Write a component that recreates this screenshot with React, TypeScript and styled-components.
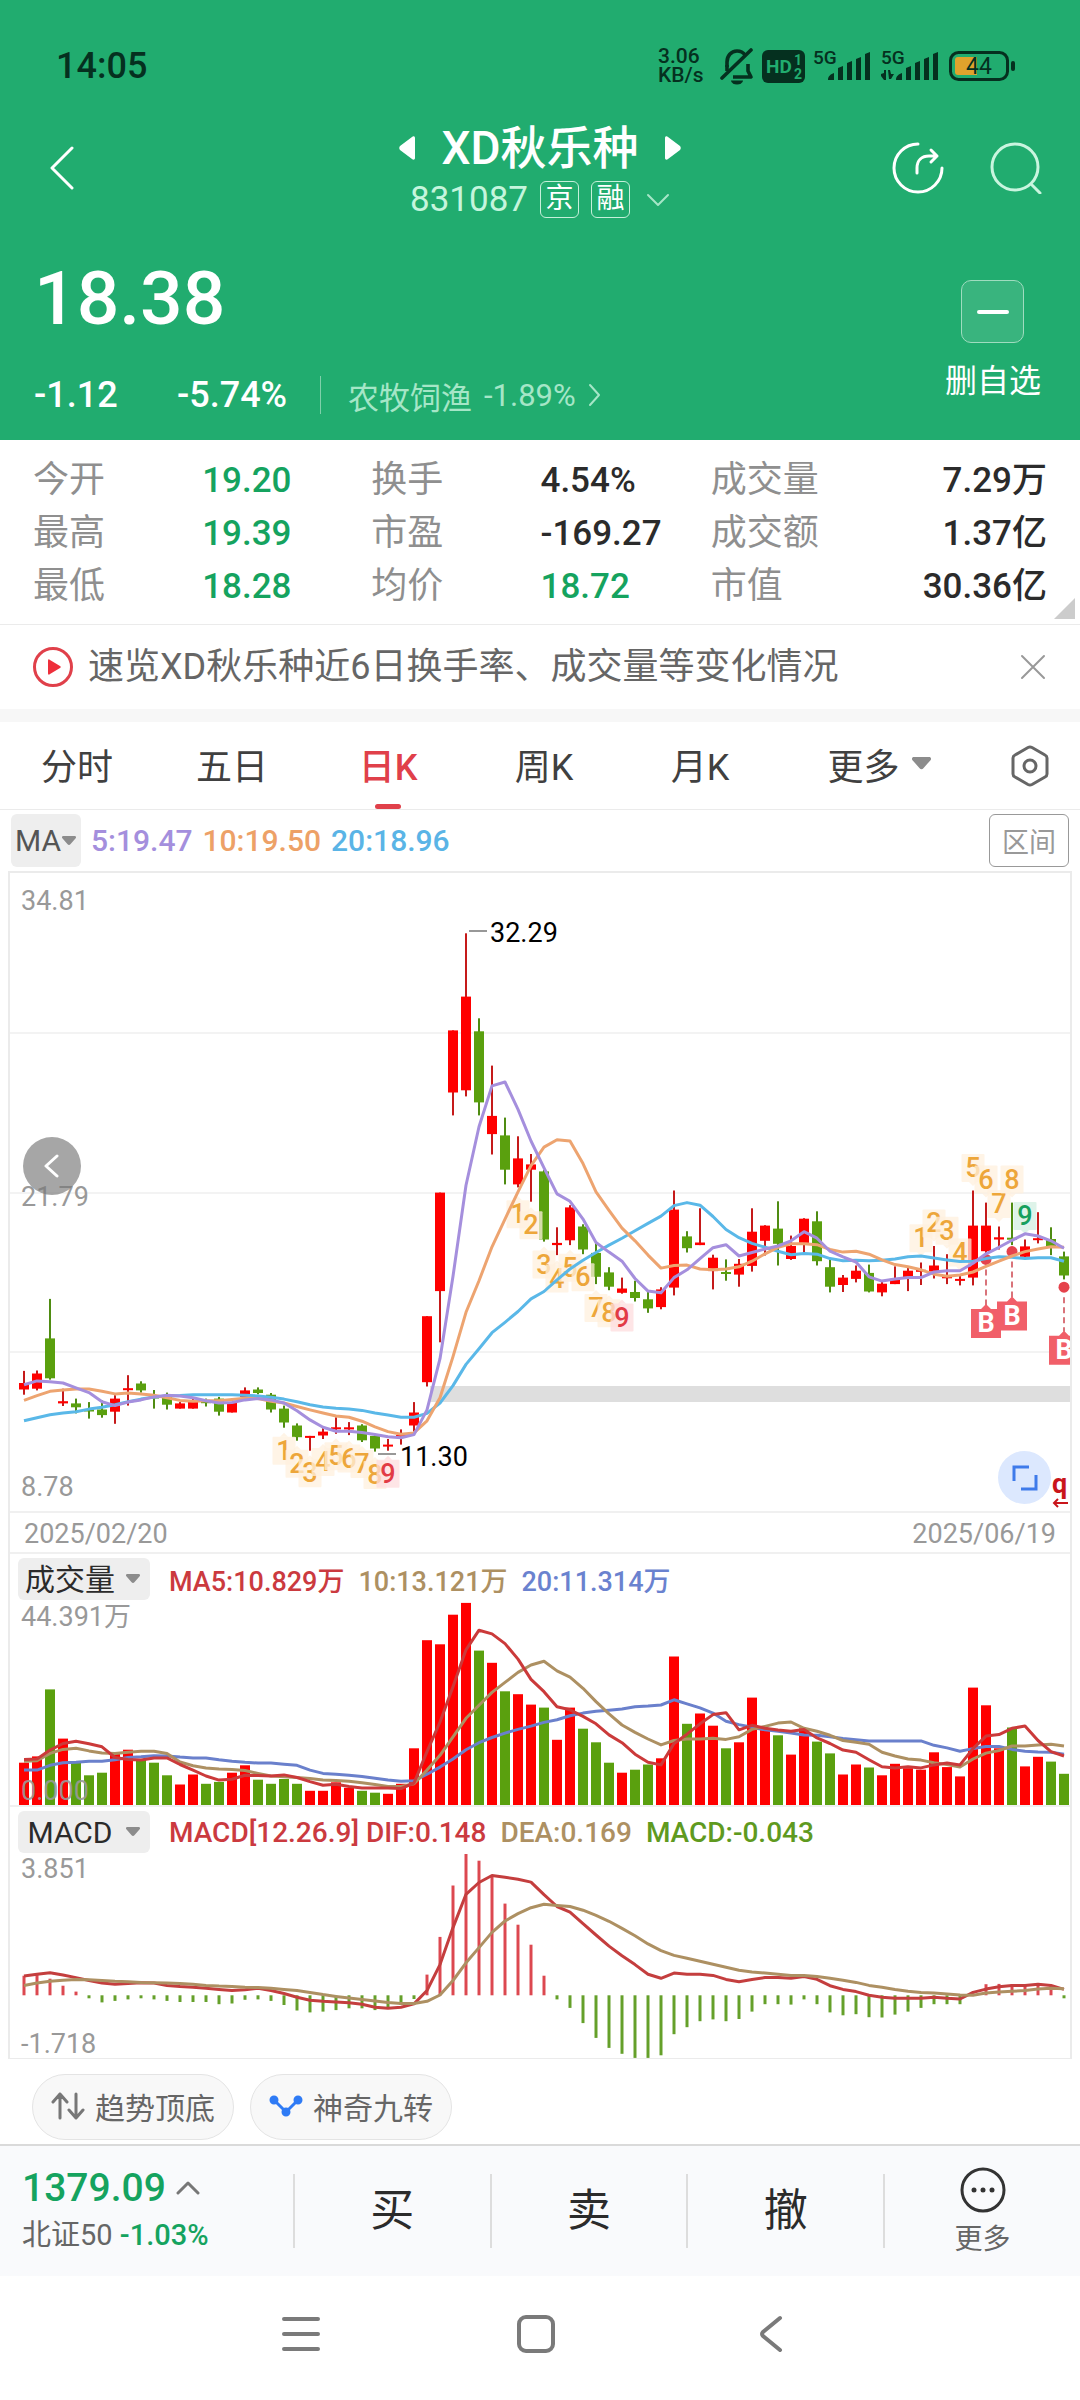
import React from "react";
import styled, { createGlobalStyle } from "styled-components";

const color = {
  brand: "#21ac6f",
  ink: "#2b2b2b",
  sub: "#666666",
  mute: "#8f8f8f",
  axis: "#999999",
  line: "#ebebeb",
  red: "#e0404a",
  green: "#15a35f",
  up: "#ff0000",
  down: "#5aa00e",
  status: "#05301f",
};

/* ---------- market data, in chart units measured downwards ---------- */

type Candle = [up: 0 | 1, high: number, top: number, bottom: number, low: number];

const candles: Candle[] = [
  [1, 1178, 1206, 1221, 1233], [1, 1177, 1184, 1219, 1223], [0, 1012, 1103, 1195, 1198], [1, 1219, 1248, 1253, 1259],
  [0, 1242, 1253, 1262, 1276], [0, 1250, 1267, 1270, 1288], [0, 1246, 1267, 1280, 1286], [1, 1234, 1242, 1272, 1300],
  [1, 1188, 1218, 1221, 1258], [0, 1202, 1207, 1223, 1228], [0, 1222, 1237, 1240, 1265], [0, 1228, 1236, 1256, 1267],
  [1, 1250, 1253, 1265, 1265], [1, 1240, 1246, 1265, 1265], [0, 1242, 1248, 1252, 1260], [0, 1238, 1242, 1272, 1281],
  [1, 1250, 1252, 1274, 1274], [1, 1216, 1223, 1238, 1238], [0, 1216, 1221, 1229, 1232], [0, 1229, 1233, 1267, 1274],
  [0, 1258, 1265, 1297, 1309], [0, 1299, 1304, 1331, 1339], [1, 1328, 1328, 1332, 1362], [1, 1308, 1318, 1327, 1335],
  [1, 1285, 1308, 1311, 1323], [1, 1296, 1308, 1313, 1326], [0, 1301, 1304, 1338, 1342], [0, 1325, 1328, 1357, 1364],
  [1, 1335, 1348, 1352, 1362], [1, 1313, 1326, 1330, 1348], [1, 1250, 1274, 1304, 1318], [1, 1052, 1052, 1204, 1214],
  [1, 767, 767, 994, 1112], [1, 393, 393, 536, 589], [1, 169, 315, 531, 545], [0, 365, 395, 559, 589],
  [1, 474, 590, 632, 679], [0, 594, 635, 714, 748], [1, 637, 688, 748, 755], [1, 678, 702, 714, 788],
  [0, 715, 718, 875, 880], [1, 847, 883, 888, 911], [1, 796, 801, 877, 888], [0, 840, 845, 898, 909],
  [0, 880, 906, 961, 978], [0, 939, 951, 984, 992], [1, 963, 988, 998, 1000], [0, 970, 996, 1010, 1018],
  [0, 995, 1013, 1034, 1044], [1, 985, 990, 1031, 1036], [1, 762, 806, 986, 1004], [0, 856, 868, 895, 905],
  [1, 803, 882, 888, 888], [1, 910, 917, 948, 990], [0, 921, 950, 953, 970], [1, 920, 931, 956, 984],
  [1, 803, 857, 936, 949], [1, 842, 843, 878, 912], [0, 787, 850, 885, 935], [1, 866, 890, 920, 922],
  [1, 826, 827, 883, 905], [0, 810, 833, 925, 935], [0, 922, 939, 984, 997], [1, 957, 963, 980, 996],
  [1, 935, 947, 966, 974], [0, 933, 952, 995, 997], [1, 972, 977, 997, 1006], [1, 937, 966, 978, 978],
  [1, 940, 947, 963, 994], [1, 928, 945, 949, 980], [1, 890, 935, 949, 965], [1, 909, 960, 964, 978],
  [1, 957, 966, 970, 981], [1, 762, 843, 963, 981], [1, 790, 843, 902, 920], [1, 845, 870, 875, 898],
  [0, 790, 871, 875, 888], [1, 875, 891, 915, 918], [1, 812, 872, 876, 884], [0, 847, 874, 890, 911],
  [0, 903, 914, 958, 967],
];

const priceMa5 = [1210, 1201, 1203, 1206, 1217, 1228, 1249, 1258, 1250, 1245, 1238, 1234, 1236, 1240, 1247, 1252, 1251, 1245, 1242, 1245, 1252, 1270, 1291, 1308, 1317, 1317, 1320, 1325, 1330, 1332, 1325, 1268, 1150, 960, 750, 615, 521, 512, 575, 648, 710, 770, 787, 828, 882, 904, 925, 965, 994, 998, 963, 945, 919, 894, 887, 913, 905, 897, 890, 878, 857, 872, 902, 915, 927, 961, 971, 966, 963, 963, 950, 947, 947, 930, 908, 893, 877, 862, 867, 878, 895];
const priceMa10 = [1246, 1235, 1225, 1222, 1220, 1220, 1225, 1231, 1229, 1231, 1234, 1240, 1246, 1248, 1247, 1247, 1244, 1241, 1242, 1248, 1252, 1260, 1268, 1275, 1282, 1285, 1294, 1307, 1318, 1324, 1321, 1293, 1240, 1145, 1043, 970, 892, 828, 765, 705, 662, 645, 648, 700, 765, 808, 849, 878, 911, 941, 935, 934, 943, 945, 943, 938, 925, 908, 893, 885, 885, 887, 898, 904, 902, 909, 922, 933, 938, 945, 955, 960, 957, 950, 937, 925, 913, 903, 897, 892, 893];
const priceMa20 = [1293, 1286, 1279, 1275, 1272, 1266, 1262, 1256, 1249, 1243, 1238, 1236, 1235, 1233, 1233, 1233, 1233, 1234, 1236, 1239, 1243, 1249, 1256, 1261, 1264, 1266, 1269, 1275, 1280, 1285, 1285, 1276, 1252, 1212, 1163, 1127, 1090, 1066, 1041, 1012, 995, 968, 943, 923, 905, 888, 872, 855, 838, 821, 797, 790, 796, 822, 852, 871, 884, 893, 902, 910, 907, 909, 919, 924, 923, 924, 923, 920, 915, 913, 918, 922, 926, 925, 919, 915, 916, 919, 917, 917, 925];

const volumes = [710, 693, 512, 645, 710, 744, 737, 681, 675, 700, 710, 744, 769, 742, 767, 762, 737, 717, 756, 767, 754, 767, 786, 786, 763, 778, 786, 791, 794, 767, 671, 379, 390, 310, 278, 407, 440, 517, 525, 553, 561, 648, 561, 618, 655, 710, 737, 729, 715, 698, 423, 605, 577, 610, 671, 655, 534, 622, 636, 688, 617, 653, 685, 742, 715, 723, 744, 713, 725, 729, 682, 722, 747, 507, 555, 671, 615, 720, 694, 707, 740];
const volMa5 = [701, 700, 676, 658, 652, 659, 667, 696, 701, 703, 697, 697, 715, 730, 746, 757, 755, 744, 745, 746, 743, 750, 761, 771, 768, 774, 778, 778, 778, 780, 765, 680, 600, 505, 405, 352, 362, 388, 430, 485, 518, 559, 567, 585, 605, 635, 656, 687, 709, 716, 658, 633, 605, 580, 575, 621, 609, 617, 622, 625, 620, 643, 658, 676, 682, 702, 721, 724, 721, 724, 716, 711, 716, 672, 638, 634, 617, 611, 650, 680, 692];
const volMa10 = [706, 705, 685, 674, 671, 678, 684, 685, 682, 679, 679, 685, 708, 718, 724, 727, 728, 731, 739, 746, 748, 750, 753, 757, 758, 760, 764, 769, 774, 774, 767, 730, 690, 640, 590, 555, 520, 493, 466, 446, 436, 462, 479, 509, 545, 578, 608, 628, 646, 662, 650, 646, 646, 644, 647, 640, 620, 612, 603, 600, 617, 625, 636, 650, 655, 660, 682, 692, 700, 703, 710, 715, 722, 700, 684, 677, 665, 665, 662, 660, 665];
const volMa20 = [730, 730, 717, 710, 709, 706, 706, 702, 696, 694, 691, 692, 695, 697, 697, 702, 706, 709, 711, 711, 714, 717, 730, 739, 741, 744, 747, 752, 757, 760, 759, 741, 722, 700, 675, 656, 642, 630, 620, 611, 601, 594, 583, 576, 571, 568, 565, 559, 557, 554, 540, 551, 562, 576, 598, 607, 614, 621, 625, 630, 635, 636, 640, 645, 648, 651, 651, 651, 651, 651, 663, 670, 679, 672, 666, 666, 674, 679, 681, 682, 687];

const MACD_ZERO = 1338;
const macdBars = [1285, 1282, 1293, 1312, 1328, 1346, 1357, 1353, 1349, 1346, 1349, 1353, 1356, 1356, 1356, 1362, 1360, 1350, 1349, 1353, 1364, 1379, 1384, 1382, 1378, 1373, 1373, 1378, 1372, 1364, 1348, 1282, 1180, 1041, 952, 974, 1014, 1090, 1147, 1201, 1285, 1349, 1372, 1413, 1453, 1480, 1496, 1507, 1507, 1500, 1443, 1424, 1408, 1403, 1408, 1402, 1382, 1362, 1362, 1363, 1349, 1362, 1384, 1392, 1389, 1397, 1398, 1390, 1382, 1372, 1362, 1362, 1362, 1332, 1308, 1307, 1308, 1309, 1307, 1312, 1346];
const dif = [1286, 1281, 1277, 1283, 1290, 1298, 1305, 1308, 1306, 1304, 1305, 1311, 1314, 1316, 1319, 1322, 1325, 1323, 1319, 1325, 1333, 1343, 1351, 1354, 1356, 1358, 1362, 1370, 1373, 1370, 1361, 1325, 1255, 1155, 1065, 1033, 1014, 1019, 1024, 1032, 1066, 1098, 1113, 1144, 1175, 1205, 1231, 1255, 1281, 1292, 1278, 1281, 1281, 1284, 1295, 1301, 1295, 1290, 1290, 1292, 1287, 1295, 1312, 1322, 1328, 1338, 1343, 1346, 1346, 1346, 1343, 1346, 1348, 1330, 1321, 1315, 1311, 1311, 1308, 1311, 1322];
const dea = [1311, 1305, 1300, 1297, 1295, 1296, 1298, 1300, 1301, 1303, 1304, 1305, 1306, 1308, 1311, 1313, 1314, 1316, 1317, 1319, 1322, 1325, 1330, 1336, 1341, 1345, 1349, 1353, 1357, 1360, 1360, 1354, 1337, 1298, 1250, 1209, 1168, 1137, 1117, 1101, 1092, 1095, 1098, 1108, 1122, 1138, 1157, 1177, 1199, 1217, 1230, 1238, 1246, 1254, 1262, 1270, 1275, 1278, 1281, 1284, 1284, 1287, 1292, 1297, 1303, 1311, 1316, 1322, 1327, 1330, 1332, 1334, 1337, 1338, 1332, 1329, 1327, 1325, 1321, 1319, 1320];

/* Nine-turn counts: day index, vertical centre, digit */
type Turn = [day: number, y: number, digit: number];
const turnsBelow: Turn[] = [
  [20, 1362, 1], [21, 1392, 2], [22, 1414, 3], [23, 1388, 4], [24, 1375, 5], [25, 1380, 6], [26, 1393, 7], [27, 1418, 8], [28, 1415, 9],
  [38, 817, 1], [39, 842, 2], [40, 933, 3], [41, 965, 4], [42, 940, 5], [43, 962, 6], [44, 1033, 7], [45, 1045, 8], [46, 1055, 9],
];
const turnsAbove: Turn[] = [
  [69, 872, 1], [70, 838, 2], [71, 855, 3], [72, 905, 4], [73, 710, 5], [74, 737, 6], [75, 793, 7], [76, 737, 8], [77, 821, 9],
];
const buys = [
  { day: 74, dot: 921, flag: 1035 },
  { day: 76, dot: 903, flag: 1018 },
  { day: 80, dot: 985, flag: 1097 },
];

const dayX = (i: number) => 14 + 13 * i;
const scaleFrom = (origin: number, factor: number) => (v: number) => Math.round((v - origin) * factor * 10) / 10;
const priceY = scaleFrom(30, 0.4337);
const volY = scaleFrom(273, 0.37);
const macdY = scaleFrom(956, 0.37);
const points = (values: number[], y: (v: number) => number) => values.map((v, i) => `${dayX(i)},${y(v)}`).join(" ");

/* ---------- base ---------- */

const GlobalStyle = createGlobalStyle`
  *, *::before, *::after { box-sizing: border-box; }
  body {
    margin: 0;
    background: #fff;
    color: ${color.ink};
    font-family: Roboto, "Noto Sans CJK SC", sans-serif;
  }
  button, select {
    margin: 0; padding: 0; border: 0; background: none;
    color: inherit; font: inherit; cursor: pointer;
  }
  svg { display: block; flex: none; }
  dl, dd, h1, p { margin: 0; font-weight: inherit; font-size: inherit; }
`;

const Page = styled.div`
  display: flex;
  flex-direction: column;
`;

/* ---------- header ---------- */

const Header = styled.header`
  background: ${color.brand};
  color: #fff;
`;

const StatusBar = styled.div`
  display: flex;
  align-items: center;
  height: 112px;
  padding: 20px 64px 0 56px;
  color: ${color.status};
`;

const Clock = styled.span`
  margin-right: auto;
  font-size: 36px;
  font-weight: 500;
`;

const NetSpeed = styled.span`
  width: 62px;
  font-size: 21px;
  line-height: 19px;
  font-weight: 500;
`;

const StatusIcons = styled.div`
  display: flex;
  align-items: center;
  gap: 8px;
`;

const TitleBar = styled.div`
  display: grid;
  grid-template-columns: 1fr auto 1fr;
  align-items: center;
  height: 112px;
  padding: 0 38px;
`;

const IconButton = styled.button`
  display: flex;
  align-items: center;
  justify-content: center;
`;

const BackButton = styled(IconButton)`
  justify-self: start;
  padding: 0 10px;
`;

const TitleBlock = styled.div`
  display: flex;
  flex-direction: column;
  align-items: center;
  gap: 3px;
`;

const TitleLine = styled.div`
  display: flex;
  align-items: center;
  gap: 26px;
`;

const StockName = styled.h1`
  font-size: 46px;
  line-height: 60px;
  font-weight: 500;
`;

const CodeLine = styled.div`
  display: flex;
  align-items: center;
  gap: 12px;
  font-size: 35px;
  line-height: 38px;
  color: #c5f5dd;
`;

const Tag = styled.span`
  width: 39px;
  height: 37px;
  border: 1px solid #c5f0da;
  border-radius: 6px;
  color: #fff;
  font-size: 28px;
  line-height: 34px;
  text-align: center;
`;

const Actions = styled.div`
  display: flex;
  justify-content: flex-end;
  gap: 46px;
`;

const QuoteArea = styled.div`
  display: flex;
  justify-content: space-between;
  padding: 32px 39px 26px 34px;
`;

const Price = styled.p`
  font-size: 75px;
  line-height: 84px;
  font-weight: 500;
`;

const ChangeLine = styled.div`
  display: flex;
  align-items: center;
  margin-top: 36px;
  height: 38px;
  font-size: 36px;
  font-weight: 500;
`;

const Change = styled.span`
  min-width: 143px;
`;

const Sector = styled.a`
  display: flex;
  align-items: center;
  gap: 12px;
  height: 38px;
  padding-left: 27px;
  border-left: 1px solid #7fd0aa;
  color: #a5e6c7;
  font-size: 31px;
  font-weight: 400;
  text-decoration: none;
`;

const RemoveButton = styled.button`
  display: flex;
  flex-direction: column;
  align-items: center;
  gap: 18px;
  padding-top: 24px;
  align-self: flex-start;
  font-size: 32px;
  line-height: 40px;
`;

const MinusBox = styled.span`
  display: flex;
  align-items: center;
  justify-content: center;
  width: 63px;
  height: 63px;
  border: 1px solid #9fdcbf;
  border-radius: 10px;
  background: #39b47e;
`;

/* ---------- stats and notice ---------- */

const Stats = styled.dl`
  position: relative;
  display: grid;
  grid-template-columns: 169fr 169fr 169fr 170fr 168fr 168fr;
  padding: 14px 33px 11px;
  border-bottom: 1px solid ${color.line};
  font-size: 36px;
  line-height: 53px;
`;

const StatLabel = styled.dt`
  color: ${color.mute};
`;

const StatValue = styled.dd<{ $down?: boolean; $end?: boolean }>`
  color: ${(p) => (p.$down ? color.green : color.ink)};
  text-align: ${(p) => (p.$end ? "right" : "left")};
  font-size: 35px;
  font-weight: 500;
  white-space: nowrap;
`;

const Corner = styled.span`
  position: absolute;
  right: 5px;
  bottom: 5px;
  border-left: 21px solid transparent;
  border-bottom: 21px solid #cccccc;
`;

const Notice = styled.section`
  display: flex;
  align-items: center;
  gap: 14px;
  height: 84px;
  padding: 0 34px 0 32px;
  color: ${color.sub};
`;

const NoticeText = styled.p`
  flex: 1;
  font-size: 36px;
  line-height: 42px;
`;

const Strip = styled.div`
  height: 13px;
  background: #f7f7f7;
`;

/* ---------- tabs ---------- */

const Tabs = styled.nav`
  display: grid;
  grid-template-columns: 154fr repeat(4, 156fr) 202fr 100fr;
  height: 88px;
  border-bottom: 1px solid ${color.line};
`;

const Tab = styled.button<{ $active?: boolean }>`
  position: relative;
  display: flex;
  align-items: center;
  justify-content: center;
  gap: 12px;
  padding-bottom: 4px;
  font-size: 36px;
  color: ${(p) => (p.$active ? color.red : "#404040")};
  font-weight: ${(p) => (p.$active ? 500 : 400)};

  &::after {
    content: "";
    display: ${(p) => (p.$active ? "block" : "none")};
    position: absolute;
    bottom: 0;
    width: 26px;
    height: 5px;
    border-radius: 3px;
    background: ${color.red};
  }
`;

const SettingsTab = styled(Tab)`
  padding-bottom: 0;
`;

/* ---------- indicator rows ---------- */

const MaRow = styled.div`
  display: flex;
  align-items: center;
  gap: 10px;
  height: 61px;
  padding: 0 11px;
  font-size: 30px;
  font-weight: 500;
`;

const Picker = styled.label<{ $wide?: boolean }>`
  position: relative;
  display: flex;
  align-items: center;
  width: ${(p) => (p.$wide ? 132 : 70)}px;
  height: ${(p) => (p.$wide ? 42 : 53)}px;
  border-radius: 6px;
  background: #eeeeee;
  color: ${(p) => (p.$wide ? color.ink : "#555555")};
  font-size: 30px;
  font-weight: 400;

  select {
    appearance: none;
    width: 100%;
    height: 100%;
    padding: ${(p) => (p.$wide ? "0 28px 0 0" : "0 0 0 4px")};
    text-align: ${(p) => (p.$wide ? "center" : "left")};
  }

  svg {
    position: absolute;
    right: ${(p) => (p.$wide ? 10 : 5)}px;
    pointer-events: none;
  }
`;

const Legend = styled.span<{ $color: string }>`
  color: ${(p) => p.$color};
  white-space: nowrap;
`;

const RangeButton = styled.button`
  width: 80px;
  height: 53px;
  margin-left: auto;
  border: 1px solid #999999;
  border-radius: 6px;
  color: #999999;
  font-size: 27px;
  font-weight: 400;
`;

const ChartBox = styled.section`
  margin: 0 8px;
  border: solid ${color.line};
  border-width: 2px 2px 1px;

  text { font-size: 27px; }
`;

const PricePanel = styled.div`
  position: relative;
`;

const Plot = styled.svg`
  width: 100%;
  height: auto;
`;

const PanButton = styled.button`
  position: absolute;
  left: 13px;
  top: 264px;
  display: flex;
  align-items: center;
  justify-content: center;
  width: 58px;
  height: 58px;
  border-radius: 50%;
  background: rgba(120, 120, 120, 0.66);
`;

const ExpandButton = styled.button`
  position: absolute;
  right: 19px;
  bottom: 7px;
  display: flex;
  align-items: center;
  justify-content: center;
  width: 53px;
  height: 53px;
  border-radius: 50%;
  background: #dce8fe;
`;

const DateRow = styled.div`
  display: flex;
  justify-content: space-between;
  align-items: center;
  height: 43px;
  padding: 2px 14px 0;
  border: solid #f0f0f0;
  border-width: 2px 0;
  color: ${color.axis};
  font-size: 27px;
`;

const PanelHeader = styled.div<{ $size: number }>`
  display: flex;
  align-items: center;
  gap: 14px;
  height: 47px;
  padding: 4px 8px 1px;
  font-size: ${(p) => p.$size}px;
  font-weight: 500;

  ${Picker} { margin-right: 5px; }
`;

const VolumePanel = styled.div`
  border-bottom: 2px solid #f0f0f0;
`;

/* ---------- footer ---------- */

const Chips = styled.div`
  display: flex;
  gap: 16px;
  padding: 15px 32px 4px;
`;

const Chip = styled.button`
  display: flex;
  align-items: center;
  gap: 10px;
  height: 66px;
  padding: 0 18px 2px;
  border: 1px solid #e4e4e4;
  border-radius: 33px;
  background: #f8f8f8;
  color: ${color.sub};
  font-size: 30px;
`;

const TradeBar = styled.footer`
  display: grid;
  grid-template-columns: 293fr repeat(4, 197fr);
  align-items: center;
  height: 132px;
  border-top: 2px solid #dadada;
  background: #f9fafc;
`;

const IndexQuote = styled.button`
  padding-left: 22px;
  text-align: left;
`;

const IndexValue = styled.span`
  display: flex;
  align-items: center;
  gap: 10px;
  color: ${color.green};
  font-size: 39px;
  line-height: 48px;
  font-weight: 500;
`;

const IndexName = styled.span`
  display: block;
  color: ${color.sub};
  font-size: 29px;
  line-height: 46px;

  em { color: ${color.green}; font-style: normal; font-weight: 500; }
`;

const TradeButton = styled.button`
  height: 74px;
  border-left: 2px solid #dddddd;
  font-size: 44px;
  line-height: 74px;
`;

const MoreButton = styled(TradeButton)`
  display: flex;
  flex-direction: column;
  align-items: center;
  justify-content: center;
  gap: 7px;
  padding-top: 5px;
  color: ${color.sub};
  font-size: 28px;
  line-height: 40px;
`;

const SystemNav = styled.nav`
  display: grid;
  grid-template-columns: repeat(3, 1fr);
  height: 124px;
  padding: 0 192px 8px 183px;
`;

/* ---------- drawings ---------- */

const Caret = ({ size = 14 }: { size?: number }) => (
  <svg width={size} height={size * 0.65} viewBox="0 0 20 13" fill="#8c8c8c" aria-hidden>
    <path d="M2 0h16c2 0 2.600 2 1.500 3.300l-7.500 8.500c-1 1.300-3 1.300-4 0L.5 3.300C-.6 2 0 0 2 0z" />
  </svg>
);

const BellOff = () => (
  <svg width="34" height="38" viewBox="0 0 34 38" fill="none" stroke={color.status} strokeWidth="3.600">
    <path d="M7 20v-5c0-6 4-11 10-11 3 0 6 1 8 4M28 17v7l3 6H13" strokeLinejoin="round" />
    <path d="M31 3L2 31" strokeLinecap="round" />
    <path d="M7 18v6" />
    <path d="M11 33.500h12a6 4 0 0 1-12 0z" fill={color.status} stroke="none" />
  </svg>
);

const HdBadge = () => (
  <svg width="43" height="33" viewBox="0 0 43 33">
    <rect width="43" height="33" rx="6" fill={color.status} />
    <g fill={color.brand} fontWeight="700">
      <text x="4" y="23" fontSize="19">HD</text>
      <text x="32" y="15" fontSize="14">1</text>
      <text x="32" y="29" fontSize="14">2</text>
    </g>
  </svg>
);

const Signal = ({ data }: { data?: boolean }) => (
  <svg width="60" height="42" viewBox="0 -4 60 42" fill={color.status}>
    <text x="0" y="15" fontSize="19" fontWeight="500">5G</text>
    <path d="M15 31c0-4 3-6 6-7v7zM25 19l5-2v14h-5zM34 14l5-2v19h-5zM43 10l5-2v23h-5zM52 5l5-2v28h-5z" />
    {data && <path d="M0 25l3-1v-3h2v10H3l-3-4zM7 21h2l1 4 3 0-3 5H8z" />}
  </svg>
);

const Battery = () => (
  <svg width="67" height="30" viewBox="0 0 67 30">
    <rect x="1.500" y="1.500" width="57" height="27" rx="8" fill="none" stroke={color.status} strokeWidth="3" />
    <path d="M9 6h19v18H9a3 3 0 0 1-3-3V9a3 3 0 0 1 3-3z" fill="#e0a32c" />
    <rect x="62" y="10" width="4" height="10" rx="2" fill={color.status} />
    <text x="17" y="23" fontSize="23" fill={color.status}>44</text>
  </svg>
);

const ShareIcon = () => (
  <svg width="52" height="52" viewBox="0 0 52 52" fill="none" stroke="#fff" strokeWidth="3" strokeLinecap="round" strokeLinejoin="round">
    <path d="M26 2a24 24 0 1 0 24 24" />
    <path d="M25 31v-5c0-8 5-12 12-12h8M39 8l6 6-6 6" />
  </svg>
);

const SearchIcon = () => (
  <svg width="52" height="52" viewBox="0 0 52 52" fill="none" stroke="#c9f5df" strokeWidth="3" strokeLinecap="round">
    <circle cx="25" cy="25" r="23" />
    <path d="M42 43l8 8" />
  </svg>
);

interface ChevronProps {
  d: string;
  w: number;
  h: number;
  stroke: string;
  width?: number;
}
const Chevron = ({ d, w, h, stroke, width = 2 }: ChevronProps) => (
  <svg width={w} height={h} viewBox={`0 0 ${w} ${h}`} fill="none" stroke={stroke} strokeWidth={width} strokeLinecap="round" strokeLinejoin="round" aria-hidden>
    <path d={d} />
  </svg>
);

const TurnMark = ({ turn, above }: { turn: Turn; above?: boolean }) => {
  const [day, y, digit] = turn;
  const last = digit === 9;
  const bg = last ? (above ? "#d3efe2" : "#fddcde") : "#fff0de";
  const ink = last ? (above ? "#16a05d" : "#e23b45") : "#eda63a";
  const x = dayX(day);
  const cy = priceY(y);
  const tip = above ? `M${x - 4} ${cy + 14}l4 4 4-4z` : `M${x - 4} ${cy - 14}l4-4 4 4z`;
  return (
    <g>
      <rect x={x - 11.5} y={cy - 14} width="23" height="28" rx="1" fill={bg} fillOpacity="0.75" />
      <path d={tip} fill={bg} fillOpacity="0.75" />
      <text x={x} y={cy + 9} textAnchor="middle" fontWeight="500" fill={ink}>{digit}</text>
    </g>
  );
};

const BuyFlag = ({ day, dot, flag }: { day: number; dot: number; flag: number }) => {
  const x = dayX(day);
  const top = priceY(flag);
  return (
    <g>
      <circle cx={x} cy={priceY(dot)} r="5.5" fill="#e5424c" />
      <path d={`M${x} ${priceY(dot) + 10}V${top - 4}`} stroke="#d9737a" strokeWidth="2" strokeDasharray="6 4" />
      <path d={`M${x - 15} ${top}h10l5-5 5 5h10v29h-30z`} fill="#f15f69" />
      <text x={x} y={top + 23} textAnchor="middle" fontWeight="700" fill="#fff">B</text>
    </g>
  );
};

const PricePlot = () => (
  <Plot viewBox="0 0 1060 638" role="img" aria-label="日K线图">
    {[160, 320, 479].map((y) => (
      <path key={y} d={`M0 ${y}H1060`} stroke="#f3f3f3" strokeWidth="2" />
    ))}
    <g fill={color.axis}>
      <text x="11" y="37">34.81</text>
      <text x="11" y="333">21.79</text>
      <text x="11" y="623">8.78</text>
    </g>
    <rect x="420" y="513" width="640" height="16" fill="#dedede" />
    {candles.map(([up, high, top, bottom, low], i) => (
      <g key={i} fill={up ? color.up : color.down}>
        <rect x={dayX(i) - 1} y={priceY(high)} width="2" height={priceY(low) - priceY(high)} fill={up ? "#c51a1a" : "#4f8c12"} />
        <rect x={dayX(i) - 5} y={priceY(top)} width="10" height={Math.max(2, priceY(bottom) - priceY(top))} />
      </g>
    ))}
    {turnsBelow.map((t) => <TurnMark key={t[0]} turn={t} />)}
    {turnsAbove.map((t) => <TurnMark key={t[0]} turn={t} above />)}
    {buys.map((b) => <BuyFlag key={b.day} {...b} />)}
    <g fill="none" strokeWidth="3" strokeLinejoin="round">
      <polyline points={points(priceMa20, priceY)} stroke="#5ab8e8" />
      <polyline points={points(priceMa10, priceY)} stroke="#eda470" />
      <polyline points={points(priceMa5, priceY)} stroke="#a58fdd" />
    </g>
    <path d="M459 58h18M368 581h18" stroke="#777" strokeWidth="1.500" />
    <g fill="#000">
      <text x="480" y="69">32.29</text>
      <text x="390" y="593">11.30</text>
    </g>
    <text x="1042" y="620" fontWeight="700" fill="#c9151b">q</text>
    <path d="M1058 630h-14m4-4l-4 4 4 4" fill="none" stroke="#c9151b" strokeWidth="2" />
  </Plot>
);

const VolumePlot = () => (
  <Plot viewBox="0 0 1060 204" role="img" aria-label="成交量图">
    {volumes.map((v, i) => (
      <rect key={i} x={dayX(i) - 5} y={volY(v)} width="10" height={204 - volY(v)} fill={candles[i][0] ? color.up : color.down} />
    ))}
    <g fill="none" strokeWidth="3" strokeLinejoin="round">
      <polyline points={points(volMa20, volY)} stroke="#6a80cc" />
      <polyline points={points(volMa10, volY)} stroke="#ad9062" />
      <polyline points={points(volMa5, volY)} stroke="#cb3a3a" />
    </g>
    <g fill={color.axis}>
      <text x="11" y="25">44.391万</text>
      <text x="11" y="199" opacity="0.9">0.000</text>
    </g>
  </Plot>
);

const MacdPlot = () => (
  <Plot viewBox="0 0 1060 204" role="img" aria-label="MACD图">
    {macdBars.map((v, i) => (
      <path key={i} d={`M${dayX(i)} ${macdY(MACD_ZERO)}V${macdY(v)}`} stroke={v < MACD_ZERO ? "#dc4850" : "#65a02a"} strokeWidth="3" />
    ))}
    <g fill="none" strokeWidth="3" strokeLinejoin="round">
      <polyline points={points(dif, macdY)} stroke="#c43e3e" />
      <polyline points={points(dea, macdY)} stroke="#ad9062" />
    </g>
    <g fill={color.axis}>
      <text x="11" y="24">3.851</text>
      <text x="11" y="199">-1.718</text>
    </g>
  </Plot>
);

/* ---------- page ---------- */

const stats = [
  { label: "今开", value: "19.20", down: true },
  { label: "换手", value: "4.54%" },
  { label: "成交量", value: "7.29万", end: true },
  { label: "最高", value: "19.39", down: true },
  { label: "市盈", value: "-169.27" },
  { label: "成交额", value: "1.37亿", end: true },
  { label: "最低", value: "18.28", down: true },
  { label: "均价", value: "18.72", down: true },
  { label: "市值", value: "30.36亿", end: true },
];

export default function App() {
  const [tab, setTab] = React.useState("日K");
  return (
    <Page>
      <GlobalStyle />
      <Header>
        <StatusBar>
          <Clock>14:05</Clock>
          <NetSpeed>3.06<br />KB/s</NetSpeed>
          <StatusIcons>
            <BellOff />
            <HdBadge />
            <Signal />
            <Signal data />
            <Battery />
          </StatusIcons>
        </StatusBar>
        <TitleBar>
          <BackButton aria-label="返回">
            <Chevron d="M24 2L4 22l20 20" w={28} h={44} stroke="#fff" width={3} />
          </BackButton>
          <TitleBlock>
            <TitleLine>
              <IconButton aria-label="上一只">
                <svg width="16" height="24" viewBox="0 0 16 24" fill="#fff"><path d="M16 2v20c0 2-2 2-3 1L1 14c-1-1-1-3 0-4L13 1c1-1 3-1 3 1z" /></svg>
              </IconButton>
              <StockName>XD秋乐种</StockName>
              <IconButton aria-label="下一只">
                <svg width="16" height="24" viewBox="0 0 16 24" fill="#fff"><path d="M0 2v20c0 2 2 2 3 1l12-9c1-1 1-3 0-4L3 1C2 0 0 0 0 2z" /></svg>
              </IconButton>
            </TitleLine>
            <CodeLine>
              831087
              <Tag>京</Tag>
              <Tag>融</Tag>
              <Chevron d="M6 2l10 10L26 2" w={28} h={14} stroke="#a5e6c7" />
            </CodeLine>
          </TitleBlock>
          <Actions>
            <IconButton aria-label="分享"><ShareIcon /></IconButton>
            <IconButton aria-label="搜索"><SearchIcon /></IconButton>
          </Actions>
        </TitleBar>
        <QuoteArea>
          <div>
            <Price>18.38</Price>
            <ChangeLine>
              <Change>-1.12</Change>
              <Change>-5.74%</Change>
              <Sector href="#sector">
                <span>农牧饲渔</span>
                <span>-1.89%</span>
                <Chevron d="M2 2l9 10-9 10" w={13} h={24} stroke="#a5e6c7" />
              </Sector>
            </ChangeLine>
          </div>
          <RemoveButton>
            <MinusBox>
              <Chevron d="M2 3h28" w={32} h={6} stroke="#fff" width={4} />
            </MinusBox>
            删自选
          </RemoveButton>
        </QuoteArea>
      </Header>

      <Stats>
        {stats.map((s) => (
          <React.Fragment key={s.label}>
            <StatLabel>{s.label}</StatLabel>
            <StatValue $down={s.down} $end={s.end}>{s.value}</StatValue>
          </React.Fragment>
        ))}
        <Corner as="dd" />
      </Stats>

      <Notice>
        <svg width="42" height="42" viewBox="0 0 42 42">
          <circle cx="21" cy="21" r="18.500" fill="none" stroke={color.red} strokeWidth="3" />
          <path d="M16 15c0-2 1-2 2-1l10 6c1 1 1 1 0 2l-10 6c-1 1-2 1-2-1z" fill="#ee2f3b" />
        </svg>
        <NoticeText>速览XD秋乐种近6日换手率、成交量等变化情况</NoticeText>
        <IconButton aria-label="关闭">
          <Chevron d="M2 2l22 22M24 2L2 24" w={26} h={26} stroke="#999" />
        </IconButton>
      </Notice>
      <Strip />

      <Tabs>
        {["分时", "五日", "日K", "周K", "月K"].map((name) => (
          <Tab key={name} $active={name === tab} onClick={() => setTab(name)}>{name}</Tab>
        ))}
        <Tab aria-haspopup="menu">更多<Caret size={19} /></Tab>
        <SettingsTab aria-label="设置">
          <svg width="40" height="42" viewBox="0 0 40 42" fill="none" stroke="#666" strokeWidth="3" strokeLinejoin="round">
            <path d="M18 2.500q2-1 4 0l13 7.500q2 1 2 3v16q0 2-2 3l-13 7.500q-2 1-4 0L5 32q-2-1-2-3V13q0-2 2-3z" />
            <circle cx="20" cy="21" r="6" />
          </svg>
        </SettingsTab>
      </Tabs>

      <MaRow>
        <Picker>
          <select aria-label="主图指标"><option>MA</option></select>
          <Caret />
        </Picker>
        <Legend $color="#a48fdd">5:19.47</Legend>
        <Legend $color="#eda167">10:19.50</Legend>
        <Legend $color="#5ab4e6">20:18.96</Legend>
        <RangeButton>区间</RangeButton>
      </MaRow>

      <ChartBox>
        <PricePanel>
          <PricePlot />
          <PanButton aria-label="向前">
            <Chevron d="M14 2L3 12l11 10" w={18} h={24} stroke="#fff" width={3} />
          </PanButton>
          <ExpandButton aria-label="全屏">
            <svg width="26" height="26" viewBox="0 0 26 26" fill="none" stroke="#3f7bea" strokeWidth="3">
              <path d="M2 16V2h15M24 10v14H9" />
            </svg>
          </ExpandButton>
        </PricePanel>
        <DateRow>
          <span>2025/02/20</span>
          <span>2025/06/19</span>
        </DateRow>
        <VolumePanel>
          <PanelHeader $size={27}>
            <Picker $wide>
              <select aria-label="副图指标一"><option>成交量</option></select>
              <Caret />
            </Picker>
            <Legend $color="#cb3a3f">MA5:10.829万</Legend>
            <Legend $color="#ad9062">10:13.121万</Legend>
            <Legend $color="#6a82cf">20:11.314万</Legend>
          </PanelHeader>
          <VolumePlot />
        </VolumePanel>
        <PanelHeader $size={28}>
          <Picker $wide>
            <select aria-label="副图指标二"><option>MACD</option></select>
            <Caret />
          </Picker>
          <Legend $color="#cb3a3f">MACD[12.26.9] DIF:0.148</Legend>
          <Legend $color="#ad9062">DEA:0.169</Legend>
          <Legend $color="#5f9a1f">MACD:-0.043</Legend>
        </PanelHeader>
        <MacdPlot />
      </ChartBox>

      <Chips>
        <Chip>
          <svg width="34" height="28" viewBox="0 0 34 28" fill="none" stroke="#777" strokeWidth="3" strokeLinecap="round" strokeLinejoin="round">
            <path d="M9 26V2L2 10M9 2l7 8M25 2v24l7-8M25 26l-7-8" />
          </svg>
          趋势顶底
        </Chip>
        <Chip>
          <svg width="34" height="24" viewBox="0 0 34 24" fill="#2f7bf5" stroke="#2f7bf5" strokeWidth="3">
            <path d="M5 6l12 12L29 6" fill="none" />
            <circle cx="5" cy="6" r="3" /><circle cx="29" cy="6" r="3" /><circle cx="17" cy="18" r="3" />
          </svg>
          神奇九转
        </Chip>
      </Chips>

      <TradeBar>
        <IndexQuote>
          <IndexValue>
            1379.09
            <Chevron d="M2 13L12 3l10 10" w={24} h={16} stroke="#777" width={3} />
          </IndexValue>
          <IndexName>北证50 <em>-1.03%</em></IndexName>
        </IndexQuote>
        <TradeButton>买</TradeButton>
        <TradeButton>卖</TradeButton>
        <TradeButton>撤</TradeButton>
        <MoreButton>
          <svg width="46" height="46" viewBox="0 0 46 46" fill="#333">
            <circle cx="23" cy="23" r="21" fill="none" stroke="#333" strokeWidth="3" />
            <circle cx="14" cy="23" r="2.500" /><circle cx="23" cy="23" r="2.500" /><circle cx="32" cy="23" r="2.500" />
          </svg>
          更多
        </MoreButton>
      </TradeBar>

      <SystemNav aria-label="系统导航">
        <IconButton aria-label="最近任务">
          <Chevron d="M2 3h34M2 18h34M2 33h34" w={38} h={36} stroke="#7a7a7a" width={4} />
        </IconButton>
        <IconButton aria-label="主页">
          <svg width="40" height="40" viewBox="0 0 40 40" fill="none" stroke="#7a7a7a" strokeWidth="4">
            <rect x="3" y="3" width="34" height="34" rx="7" />
          </svg>
        </IconButton>
        <IconButton aria-label="后退">
          <Chevron d="M22 3L5 17q-2 2 0 4l17 14" w={26} h={38} stroke="#7a7a7a" width={4} />
        </IconButton>
      </SystemNav>
    </Page>
  );
}
